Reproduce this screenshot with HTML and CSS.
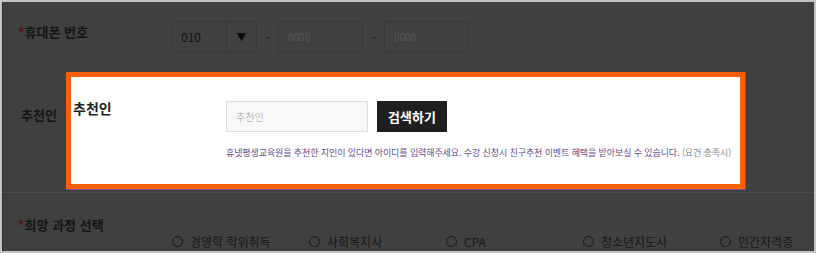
FILE: index.html
```html
<!DOCTYPE html>
<html lang="ko">
<head>
  <meta charset="UTF-8">
  <title>추천인 입력</title>
  <link rel="stylesheet" href="styles.css">
</head>
<body>
  <div id="frame">
    <div class="row phone-row">
      <p class="label"><span class="req">*</span>휴대폰 번호</p>
      <div class="fields">
        <div class="select">
          <span class="select-value">010</span>
          <span class="select-arrow">&#9660;</span>
        </div>
        <span class="dash">-</span>
        <div class="field">0000</div>
        <span class="dash">-</span>
        <div class="field">0000</div>
      </div>
    </div>

    <div class="row recommend-row">
      <p class="label">추천인</p>
    </div>

    <div class="row course-row">
      <p class="label"><span class="req">*</span>희망 과정 선택</p>
      <div class="options">
        <span class="option"><i class="radio"></i>경영학 학위취득</span>
        <span class="option"><i class="radio"></i>사회복지사</span>
        <span class="option"><i class="radio"></i>CPA</span>
        <span class="option"><i class="radio"></i>청소년지도사</span>
        <span class="option"><i class="radio"></i>민간자격증</span>
      </div>
    </div>

    <!-- highlighted popup over the dimmed form -->
    <div id="highlight">
      <p class="hl-label">추천인</p>
      <div class="hl-body">
        <div class="hl-search">
          <input class="hl-input" type="text" placeholder="추천인">
          <button class="hl-button">검색하기</button>
        </div>
        <p class="hl-help">휴넷평생교육원을 추천한 지인이 있다면 아이디를 입력해주세요. 수강 신청시 친구추천 이벤트 혜택을 받아보실 수 있습니다. <span class="hl-note">(요건 충족시)</span></p>
      </div>
    </div>
  </div>
</body>
</html>
```

FILE: styles.css
```css
body {
  margin: 0;
  font-family: "Noto Sans CJK KR", "Noto Sans", sans-serif;
}

#frame {
  position: relative;
  width: 816px;
  height: 253px;
  box-sizing: border-box;
  border: 2px solid #c4c4c4;
  box-shadow: inset 1px 0 0 #2c2c2c;
  background: #404040;
  overflow: hidden;
}

.row {
  display: flex;
  padding-left: 16px;
}

.label {
  margin: 0;
  width: 154px;
  flex-shrink: 0;
  font-size: 13px;
  font-weight: bold;
  color: #141414;
  line-height: 18px;
}

.req {
  color: #5a1616;
}

/* phone */
.phone-row {
  height: 58px;
  padding-top: 19px;
  box-sizing: border-box;
}

.phone-row .label {
  padding-top: 2px;
}

.fields {
  display: flex;
  align-items: center;
  height: 31px;
}

.select {
  display: flex;
  width: 85px;
  height: 31px;
  box-sizing: border-box;
  border: 1px solid #373737;
}

.select-value {
  flex: 1;
  padding-left: 8px;
  font-size: 12px;
  line-height: 29px;
  color: #151515;
  border-right: 1px solid #373737;
}

.select-arrow {
  width: 29px;
  text-align: center;
  font-size: 10px;
  line-height: 29px;
  color: #0c0c0c;
}

.dash {
  width: 21px;
  text-align: center;
  font-size: 12px;
  color: #1e1e1e;
}

.field {
  width: 85px;
  height: 31px;
  box-sizing: border-box;
  border: 1px solid #373737;
  padding-left: 9px;
  font-size: 10px;
  line-height: 29px;
  color: #575757;
}

/* recommend */
.recommend-row {
  height: 133px;
  box-sizing: border-box;
  border-bottom: 1px solid #4b4b4b;
  padding-left: 0;
  padding-top: 46px;
}

.recommend-row .label {
  padding-left: 19px;
  font-size: 13px;
}

/* course */
.course-row {
  padding-top: 23px;
}

.options {
  display: flex;
  padding-top: 17px;
}

.option {
  display: flex;
  align-items: center;
  width: 137px;
  font-size: 12px;
  color: #181818;
}

.radio {
  width: 9px;
  height: 9px;
  border: 1px solid #181818;
  border-radius: 50%;
  margin-right: 7px;
}

/* highlight box */
#highlight {
  position: absolute;
  left: 64px;
  top: 70px;
  width: 679px;
  height: 117px;
  box-sizing: border-box;
  border: 5px solid #ff5f00;
  box-shadow: 1px 1px 0 #7b4a8c;
  background: #fff;
  display: flex;
}

.hl-label {
  margin: 0;
  width: 155px;
  flex-shrink: 0;
  padding: 20px 0 0 2px;
  box-sizing: border-box;
  font-size: 14px;
  font-weight: bold;
  color: #222;
  line-height: 22px;
}

.hl-body {
  padding-top: 24px;
}

.hl-search {
  display: flex;
  gap: 9px;
}

.hl-input {
  width: 142px;
  height: 31px;
  box-sizing: border-box;
  border: 1px solid #dcdcdc;
  background: #f8f8f8;
  padding: 0 9px;
  font-family: inherit;
  font-size: 10px;
}

.hl-input::placeholder {
  color: #b8b8b8;
}

.hl-button {
  width: 70px;
  height: 31px;
  border: none;
  background: #1f1f1f;
  color: #fff;
  font-family: inherit;
  font-size: 13px;
  font-weight: bold;
  padding: 0;
}

.hl-help {
  margin: 14px 0 0;
  font-size: 9px;
  letter-spacing: -0.1px;
  color: #6a4f8a;
  white-space: nowrap;
}

.hl-note {
  color: #8a8a8a;
}
```
